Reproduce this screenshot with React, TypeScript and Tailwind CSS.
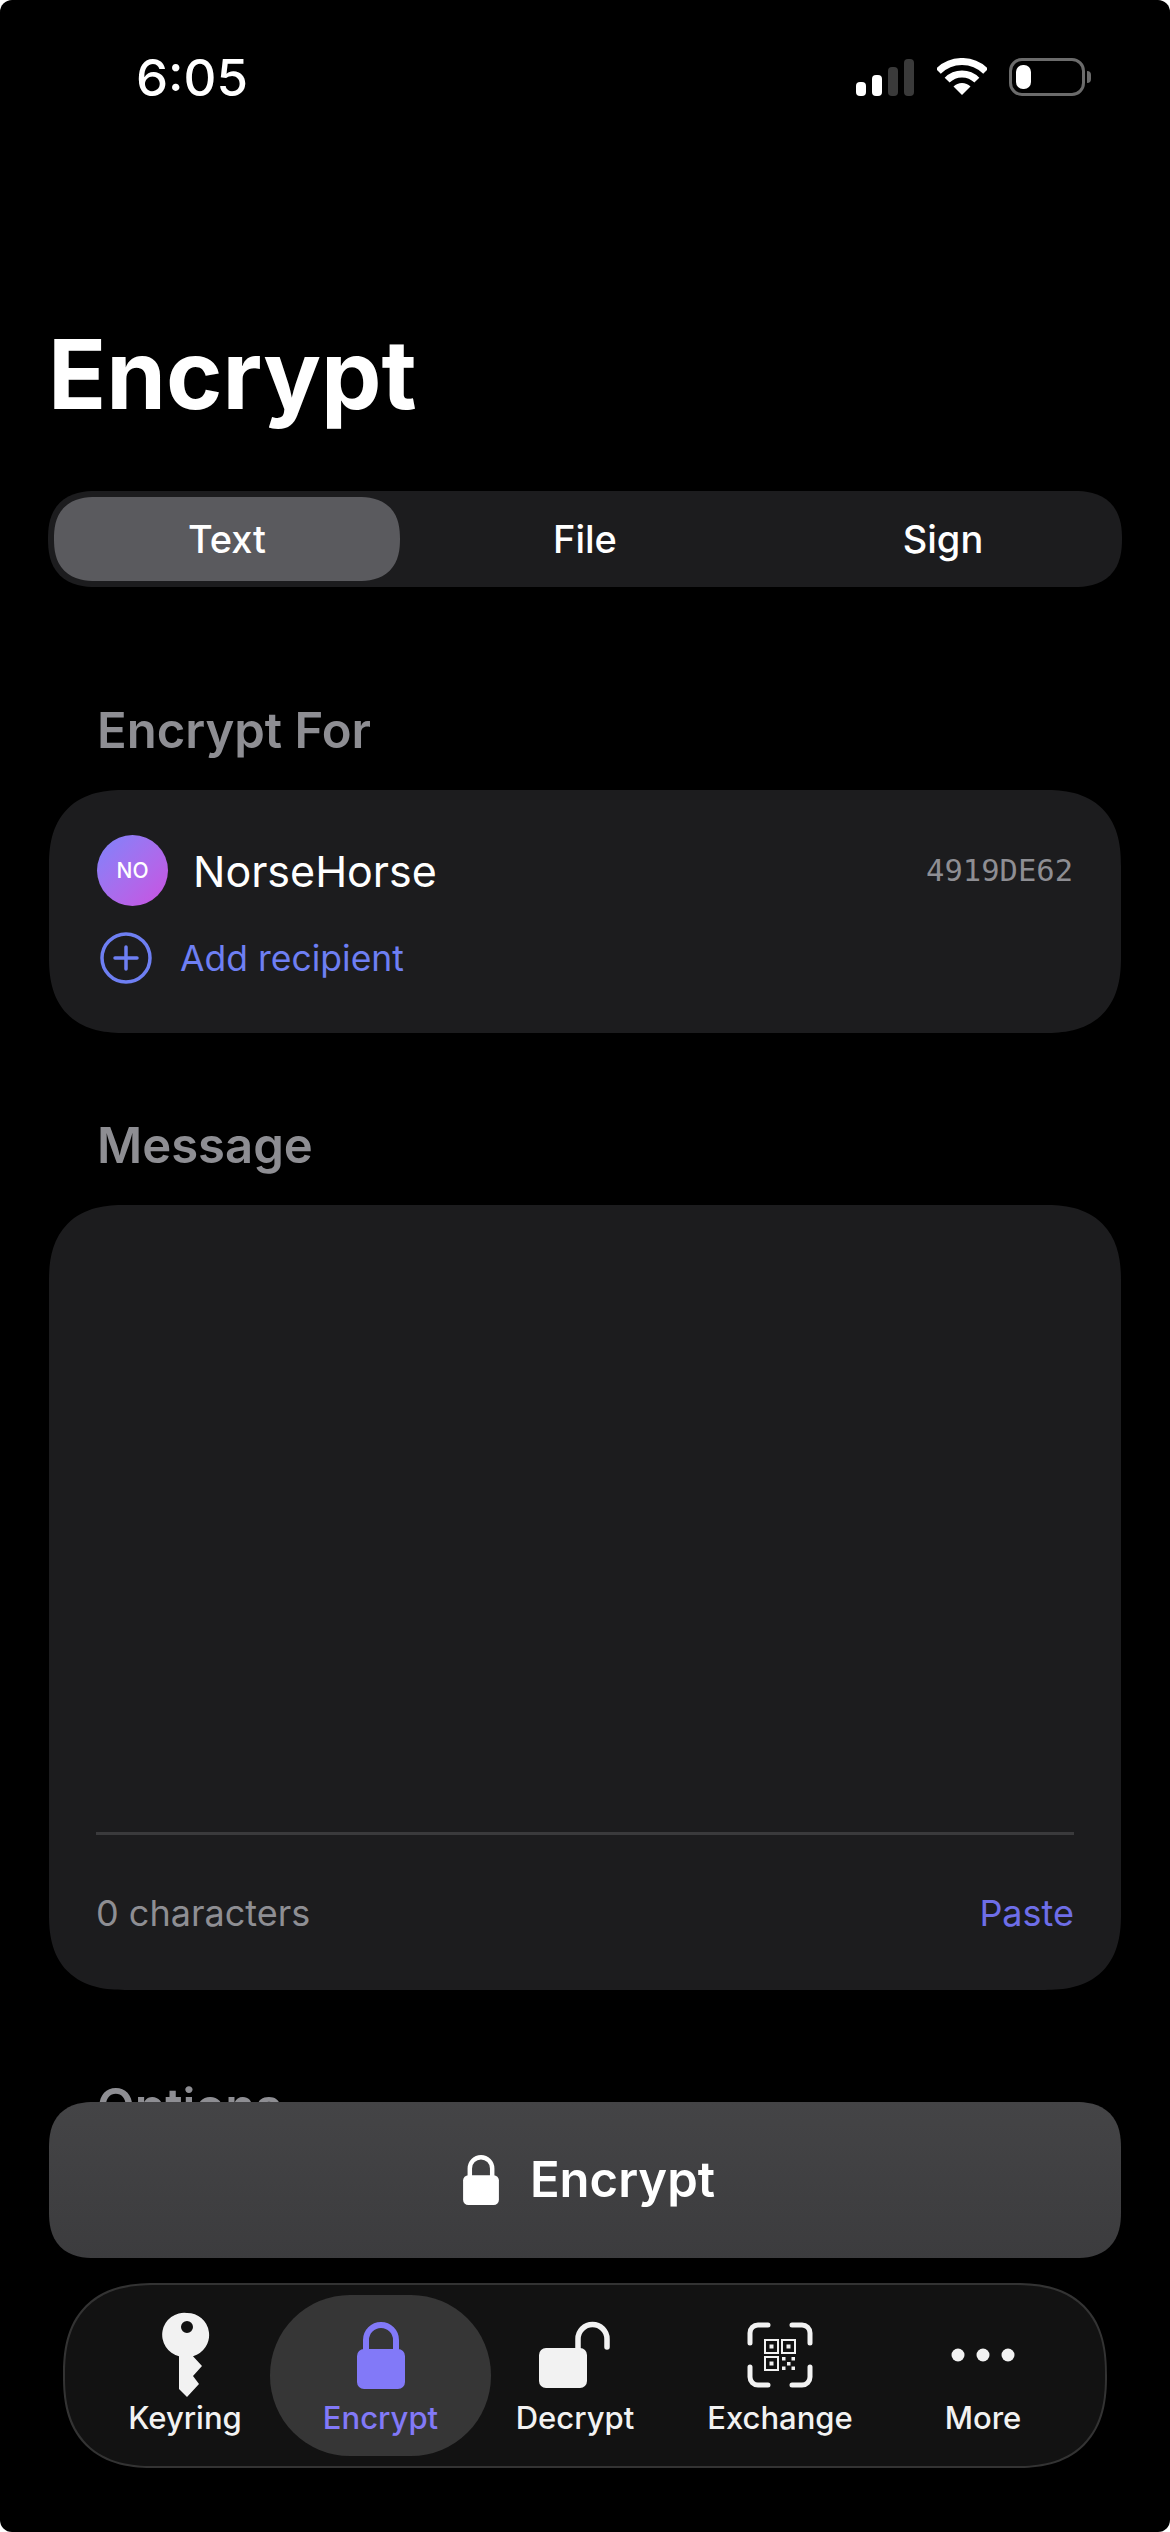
const SANS = "font-['Inter','Liberation_Sans',sans-serif]";

function KeyIcon() {
  return (
    <svg width="50" height="90" viewBox="0 0 50 90" fill="#f2f2f2">
      <path
        fillRule="evenodd"
        d="M27 3a22 22 0 0 1 6 43.2l9 9.8-9 10 6 8-12 13-8-8V46.2A22 22 0 0 1 27 3zm0 8a6 6 0 1 0 0 12 6 6 0 0 0 0-12z"
      />
    </svg>
  );
}

function LockIcon({ color, width = 48, height = 67 }: { color: string; width?: number; height?: number }) {
  return (
    <svg width={width} height={height} viewBox="0 0 48 67" fill="none">
      <path d="M9 30V18a15 15 0 0 1 30 0v12" stroke={color} strokeWidth="6" />
      <rect x="0" y="27" width="48" height="40" rx="7" fill={color} />
    </svg>
  );
}

function UnlockIcon() {
  return (
    <svg width="72" height="68" viewBox="0 0 72 68" fill="none">
      <path d="M39 30V18a14.5 14.5 0 0 1 29 0v8" stroke="#f2f2f2" strokeWidth="5.5" strokeLinecap="round" />
      <rect x="0" y="27" width="48" height="40" rx="7" fill="#f2f2f2" />
    </svg>
  );
}

function QrIcon() {
  return (
    <svg width="66" height="66" viewBox="0 0 66 66" fill="none" stroke="#f2f2f2">
      <g strokeWidth="5" strokeLinecap="round">
        <path d="M3 21V11a8 8 0 0 1 8-8h10" />
        <path d="M45 3h10a8 8 0 0 1 8 8v10" />
        <path d="M3 45v10a8 8 0 0 0 8 8h10" />
        <path d="M63 45v10a8 8 0 0 1-8 8H45" />
      </g>
      <g strokeWidth="2">
        <rect x="18" y="18" width="13" height="13" />
        <rect x="35" y="18" width="13" height="13" />
        <rect x="18" y="35" width="13" height="13" />
      </g>
      <g fill="#f2f2f2" stroke="none">
        <rect x="22.5" y="22.5" width="4" height="4" />
        <rect x="39.5" y="22.5" width="4" height="4" />
        <rect x="22.5" y="39.5" width="4" height="4" />
        <rect x="35" y="35" width="3.5" height="3.5" />
        <rect x="44.5" y="35" width="3.5" height="3.5" />
        <rect x="40" y="40" width="3.5" height="3.5" />
        <rect x="35" y="44.5" width="3.5" height="3.5" />
        <rect x="44.5" y="44.5" width="3.5" height="3.5" />
      </g>
    </svg>
  );
}

function DotsIcon() {
  return (
    <svg width="64" height="14" viewBox="0 0 64 14" fill="#f2f2f2">
      <circle cx="7" cy="7" r="6.5" />
      <circle cx="32" cy="7" r="6.5" />
      <circle cx="57" cy="7" r="6.5" />
    </svg>
  );
}

function StatusBar() {
  return (
    <div className="h-[96px] pt-[52px] pl-[136px] pr-[79px] flex justify-between items-start">
      <span className="text-[51px] leading-[52px] font-medium text-white">6:05</span>
      <div className="flex items-center mt-[6px]">
        <div className="flex items-end gap-[6px]">
          <div className="w-[10px] h-[14px] rounded-[4px] bg-white" />
          <div className="w-[10px] h-[21px] rounded-[4px] bg-white" />
          <div className="w-[10px] h-[29px] rounded-[4px] bg-[#3a3a3a]" />
          <div className="w-[10px] h-[37px] rounded-[4px] bg-[#3a3a3a]" />
        </div>
        <svg className="ml-[23px]" width="50" height="38" viewBox="0 0 50 38" fill="none">
          <path d="M1.3 13.3a33.5 33.5 0 0 1 47.4 0" stroke="#fff" strokeWidth="7" />
          <path d="M10.15 22.15a21 21 0 0 1 29.7 0" stroke="#fff" strokeWidth="7" />
          <path d="M25 37 16.5 28.5a12 12 0 0 1 17 0z" fill="#fff" />
        </svg>
        <div className="ml-[22px] w-[76px] h-[38px] rounded-[13px] border-[3px] border-[#6b6b6b] p-[4px]">
          <div className="w-[15px] h-full rounded-[7px] bg-white" />
        </div>
        <div className="ml-[2px] w-[4px] h-[12px] rounded-r-full bg-[#6b6b6b]" />
      </div>
    </div>
  );
}

function Segmented() {
  return (
    <div className="mx-[48px] mt-[57px] h-[96px] rounded-[48px] [corner-shape:superellipse(1.3)] bg-[#1c1c1e] p-[6px] flex gap-3">
      {["Text", "File", "Sign"].map((tab, i) => (
        <div
          key={tab}
          className={
            i === 0
              ? "flex-1 rounded-[42px] [corner-shape:superellipse(1.3)] bg-[#5a5a5e] flex items-center justify-center text-[38px] font-medium text-white"
              : "flex-1 flex items-center justify-center text-[38px] font-medium text-white"
          }
        >
          {tab}
        </div>
      ))}
    </div>
  );
}

function SectionLabel({ children, className }: { children: string; className: string }) {
  return (
    <h2 className={"pl-[97px] text-[49px] leading-[58px] font-semibold text-[#8e8e93] " + className}>{children}</h2>
  );
}

const TABS = [
  { label: "Keyring", icon: <KeyIcon />, width: "w-[170px]" },
  { label: "Encrypt", icon: <LockIcon color="#8279f8" />, width: "w-[221px]", active: true },
  { label: "Decrypt", icon: <UnlockIcon />, width: "w-[168px]" },
  { label: "Exchange", icon: <QrIcon />, width: "w-[242px]" },
  { label: "More", icon: <DotsIcon />, width: "w-[164px]" },
];

function TabBar() {
  return (
    <div className="absolute left-[63px] top-[2283px] w-[1044px] h-[185px] rounded-[92px] [corner-shape:superellipse(1.3)] border-2 border-[#333333] bg-[#121212] pl-[35px] py-[10px] flex">
      {TABS.map((tab) => (
        <div
          key={tab.label}
          className={
            tab.width +
            " h-[161px] relative flex flex-col items-center " +
            (tab.active ? "rounded-[80px] bg-[#363636]" : "")
          }
        >
          <div className="h-[104px] pt-[16px] flex items-center justify-center">{tab.icon}</div>
          <span
            className={
              "text-[31px] leading-[38px] font-medium " + (tab.active ? "text-[#8279f8]" : "text-[#f2f2f2]")
            }
          >
            {tab.label}
          </span>
        </div>
      ))}
    </div>
  );
}

export default function App() {
  return (
    <div className="bg-white w-[1170px] h-[2532px]">
      <div className={"relative w-full h-full rounded-[12px] overflow-hidden bg-black " + SANS}>
        <StatusBar />
        <h1 className="mt-[218px] pl-[48px] text-[96px] leading-[120px] font-bold text-white">Encrypt</h1>
        <Segmented />

        <SectionLabel className="mt-[115px]">Encrypt For</SectionLabel>
        <section className="mx-[49px] mt-[30px] h-[243px] rounded-[76px] [corner-shape:superellipse(1.3)] bg-[#1c1c1e] px-[48px] pt-[45px]">
          <div className="flex items-center">
            <div className="w-[71px] h-[71px] rounded-full bg-gradient-to-br from-[#7b83fb] to-[#c94fe0] flex items-center justify-center text-[21px] font-medium text-white">
              NO
            </div>
            <span className="ml-[25px] text-[43px] leading-[54px] text-white">NorseHorse</span>
            <span className="ml-auto text-[30.5px] font-['DejaVu_Sans_Mono','Liberation_Mono',monospace] text-[#8e8e93]">
              4919DE62
            </span>
          </div>
          <div className="mt-[26px] flex items-center">
            <svg className="ml-[3px]" width="52" height="52" viewBox="0 0 52 52" fill="none" stroke="#6e7ff3" strokeWidth="3.5">
              <circle cx="26" cy="26" r="24" />
              <path d="M26 15v22M15 26h22" strokeLinecap="round" />
            </svg>
            <span className="ml-[28px] mt-[1px] text-[35.5px] leading-[44px] text-[#6e7ff3]">Add recipient</span>
          </div>
        </section>

        <SectionLabel className="mt-[84px]">Message</SectionLabel>
        <section className="mx-[49px] mt-[30px] h-[785px] rounded-[76px] [corner-shape:superellipse(1.3)] bg-[#1c1c1e] px-[47px] pt-[627px]">
          <div className="h-[3px] bg-[#3a3a3c]" />
          <div className="mt-[56px] flex justify-between text-[36px] leading-[44px]">
            <span className="text-[#8e8e93]">0 characters</span>
            <span className="text-[#6e6ee8]">Paste</span>
          </div>
        </section>

        <SectionLabel className="mt-[88px]">Options</SectionLabel>

        <button className="absolute left-[49px] top-[2102px] w-[1072px] h-[156px] pl-[8px] rounded-[46px] [corner-shape:superellipse(1.3)] bg-gradient-to-b from-[#444446] to-[#3c3c3e] flex items-center justify-center gap-[31px] text-[49px] font-semibold text-white">
          <LockIcon color="#ffffff" width={36} height={50} />
          Encrypt
        </button>
        <TabBar />
      </div>
    </div>
  );
}
